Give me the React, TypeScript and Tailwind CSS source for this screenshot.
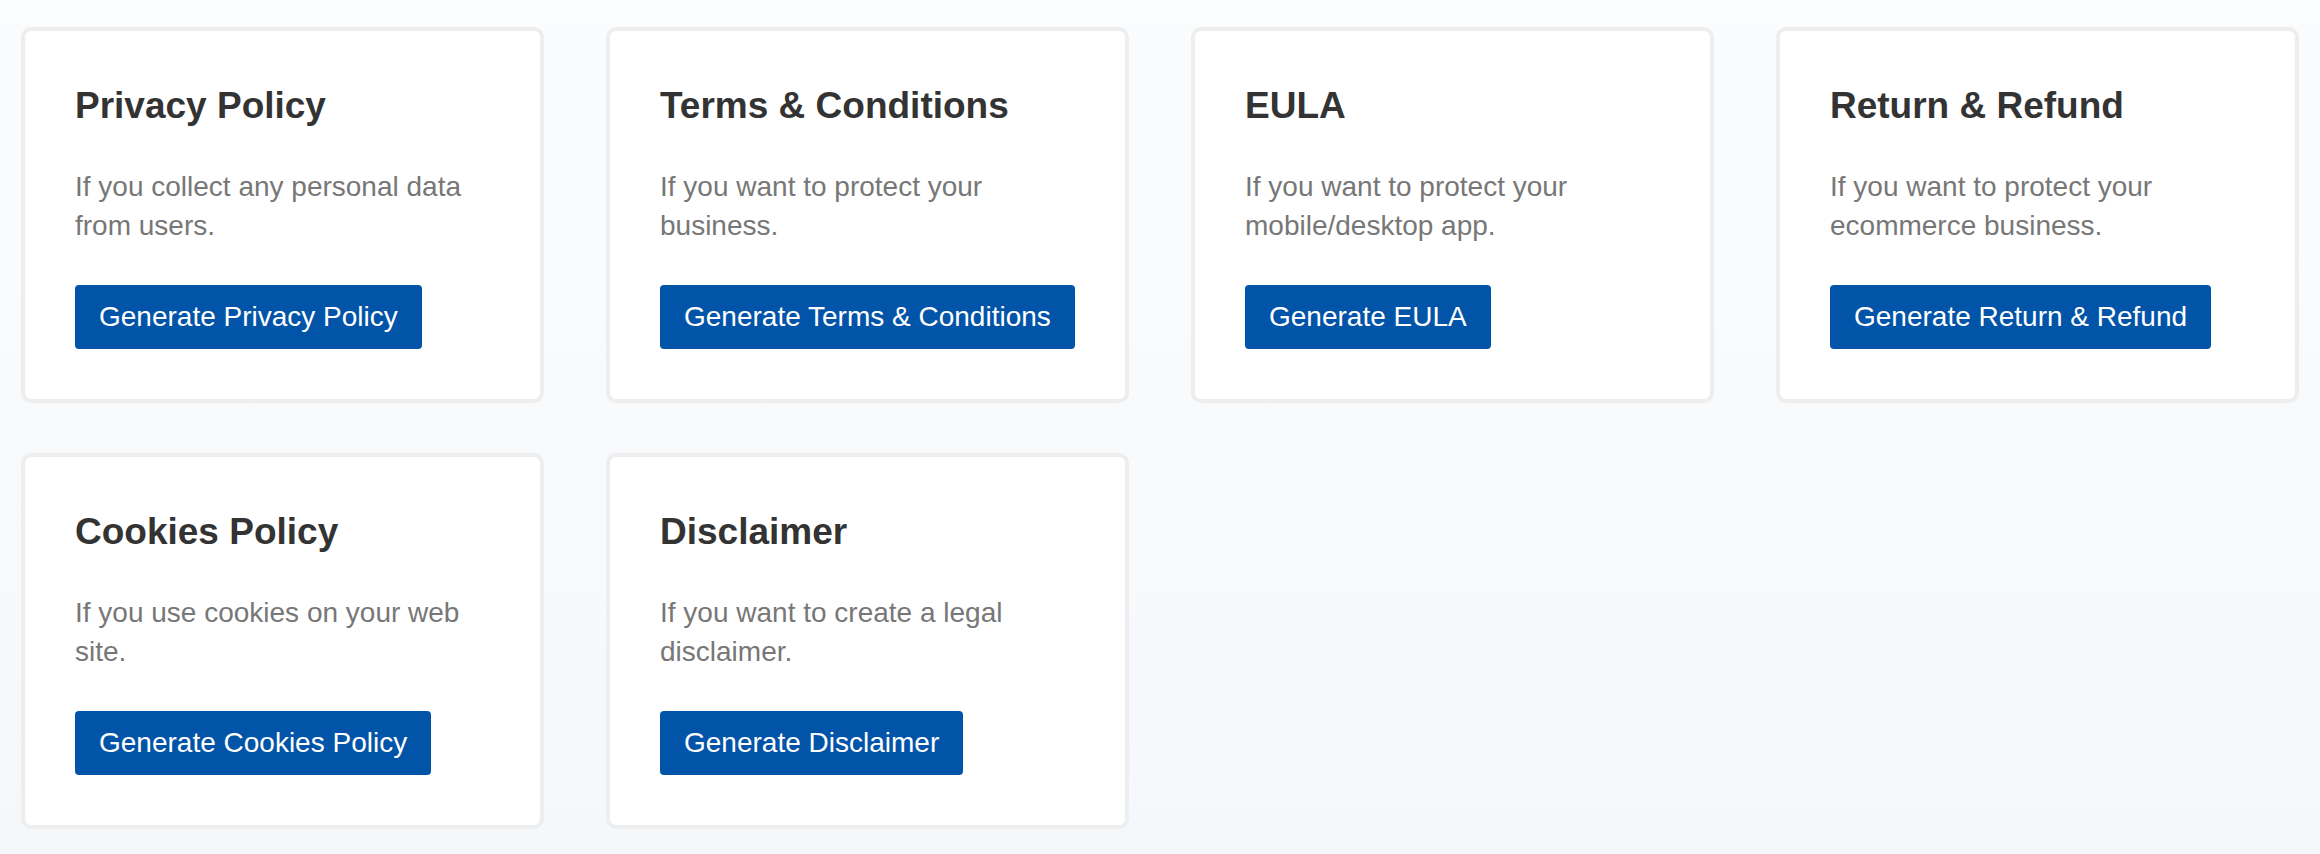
const policies = [
  {
    title: 'Privacy Policy',
    text: 'If you collect any personal data from users.',
    button: 'Generate Privacy Policy',
  },
  {
    title: 'Terms & Conditions',
    text: 'If you want to protect your business.',
    button: 'Generate Terms & Conditions',
  },
  {
    title: 'EULA',
    text: 'If you want to protect your mobile/desktop app.',
    button: 'Generate EULA',
  },
  {
    title: 'Return & Refund',
    text: 'If you want to protect your ecommerce business.',
    button: 'Generate Return & Refund',
  },
  {
    title: 'Cookies Policy',
    text: 'If you use cookies on your web site.',
    button: 'Generate Cookies Policy',
  },
  {
    title: 'Disclaimer',
    text: 'If you want to create a legal disclaimer.',
    button: 'Generate Disclaimer',
  },
];

function PolicyCard({ title, text, button }: { title: string; text: string; button: string }) {
  return (
    <div className="bg-white border-4 border-[#eeeeee] rounded-[10px] p-[50px]">
      <h2 className="text-[37px] leading-[50px] font-bold text-[#333333] mb-[37px]">{title}</h2>
      <p className="text-[28px] leading-[38.5px] text-[#777777] mb-[40px]">{text}</p>
      <a
        href="#"
        className="inline-flex items-center h-[64px] px-[24px] bg-[#0254a8] text-white text-[28px] rounded-[4px] hover:bg-[#01478f]"
      >
        {button}
      </a>
    </div>
  );
}

export default function App() {
  return (
    <div
      className="min-h-screen bg-gradient-to-b from-[#fbfcfd] to-[#f5f8fb] px-[21px] pt-[27px] pb-[27px]"
      style={{ fontFamily: '"Liberation Sans", Arial, Helvetica, sans-serif' }}
    >
      {/* Policy generators */}
      <div className="grid grid-cols-4 gap-x-[62px] gap-y-[50px]">
        {policies.map((p) => (
          <PolicyCard key={p.title} {...p} />
        ))}
      </div>
    </div>
  );
}
